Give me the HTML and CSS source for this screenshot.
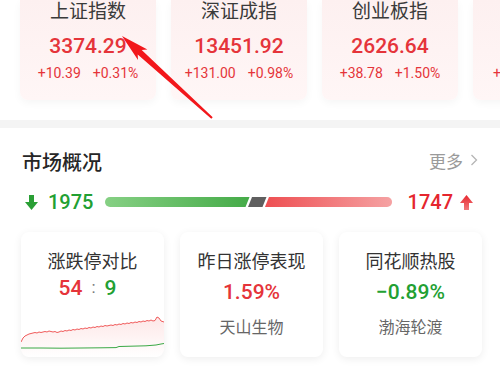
FILE: index.html
```html
<!DOCTYPE html>
<html lang="zh-CN">
<head>
<meta charset="utf-8">
<title>市场概况</title>
<link rel="stylesheet" href="styles.css">
</head>
<body>
<div class="page">
  <div class="indices">
    <div class="idx">
      <div class="idx-name">上证指数</div>
      <div class="idx-val">3374.29</div>
      <div class="idx-chg"><span>+10.39</span><span>+0.31%</span></div>
    </div>
    <div class="idx">
      <div class="idx-name">深证成指</div>
      <div class="idx-val">13451.92</div>
      <div class="idx-chg"><span>+131.00</span><span>+0.98%</span></div>
    </div>
    <div class="idx">
      <div class="idx-name">创业板指</div>
      <div class="idx-val">2626.64</div>
      <div class="idx-chg"><span>+38.78</span><span>+1.50%</span></div>
    </div>
    <div class="idx">
      <div class="idx-name">沪深300</div>
      <div class="idx-val">3912.36</div>
      <div class="idx-chg idx-chg-narrow"><span>+32.04</span><span>+0.83%</span></div>
    </div>
  </div>

  <div class="divider"></div>

  <section class="market">
    <div class="market-head">
      <h2 class="market-title">市场概况</h2>
      <a class="more">更多<svg class="chev" viewBox="0 0 8 12" width="8" height="12"><path d="M1.5 1 L6.5 6 L1.5 11" fill="none" stroke="#b5b5b5" stroke-width="1.3"/></svg></a>
    </div>

    <div class="breadth">
      <svg class="arrow" viewBox="0 0 13 15" width="13" height="15"><path d="M4 0 H9 V7 H13 L6.5 15 L0 7 H4 Z" fill="#2a9f35"/></svg>
      <span class="cnt down">1975</span>
      <svg class="bar" viewBox="0 0 288 10" width="288" height="10" preserveAspectRatio="none">
        <defs>
          <linearGradient id="gg" x1="0" x2="1" y1="0" y2="0">
            <stop offset="0" stop-color="#86d084"/>
            <stop offset="1" stop-color="#45ab48"/>
          </linearGradient>
          <linearGradient id="rg" x1="0" x2="1" y1="0" y2="0">
            <stop offset="0" stop-color="#ee4f52"/>
            <stop offset="1" stop-color="#f5a2a3"/>
          </linearGradient>
        </defs>
        <path d="M5 0 H145 L141 10 H5 A5 5 0 0 1 5 0 Z" fill="url(#gg)"/>
        <path d="M147.5 0 H162 L158 10 H143.5 Z" fill="#5f5f5f"/>
        <path d="M164.5 0 H283 A5 5 0 0 1 283 10 H160.5 Z" fill="url(#rg)"/>
      </svg>
      <span class="cnt up">1747</span>
      <svg class="arrow" viewBox="0 0 13 15" width="13" height="15">
        <defs>
          <linearGradient id="ug" x1="0" x2="0" y1="0" y2="1">
            <stop offset="0" stop-color="#e8262d"/>
            <stop offset="1" stop-color="#f07a7d"/>
          </linearGradient>
        </defs>
        <path d="M4 15 H9 V8 H13 L6.5 0 L0 8 H4 Z" fill="url(#ug)"/>
      </svg>
    </div>

    <div class="tiles">
      <div class="tile">
        <div class="tile-title">涨跌停对比</div>
        <div class="ratio"><span class="r-up">54</span><span class="r-sep">:</span><span class="r-down">9</span></div>
        <svg class="chart" viewBox="0 0 143 45" width="143" height="45" preserveAspectRatio="none">
          <defs>
            <linearGradient id="fg" x1="0" x2="0" y1="0" y2="1">
              <stop offset="0" stop-color="#f36b6b" stop-opacity="0.16"/>
              <stop offset="1" stop-color="#f36b6b" stop-opacity="0"/>
            </linearGradient>
          </defs>
          <path d="M0,30 L2,26 4,24 6,23 8,22 10,21.5 12,21 14,20.5 16,21 18,20 20,20.5 22,20 24,19.5 26,20 28,19 30,19.5 32,20 34,19.5 36,20.5 38,20 40,19 42,19.5 44,18.5 46,19 48,18 50,18.5 52,17.5 54,18 56,17 58,17.5 60,16.5 62,17 64,16 66,16.5 68,15.5 70,16 72,15 74,15.5 76,14.5 78,15 80,14 82,14.5 84,13.5 86,14 88,13.5 90,13 92,13.5 94,12.5 96,13 98,12 100,12.5 102,11.5 104,12 106,11 108,11.5 110,10.5 112,11 114,10 116,10.5 118,9.5 120,10 122,9 124,9.5 126,8.5 128,9 130,8 132,9 134,8.5 136,5 138,6 140,9 143,10 L143,45 L0,45 Z" fill="url(#fg)"/>
          <polyline points="0,30 2,26 4,24 6,23 8,22 10,21.5 12,21 14,20.5 16,21 18,20 20,20.5 22,20 24,19.5 26,20 28,19 30,19.5 32,20 34,19.5 36,20.5 38,20 40,19 42,19.5 44,18.5 46,19 48,18 50,18.5 52,17.5 54,18 56,17 58,17.5 60,16.5 62,17 64,16 66,16.5 68,15.5 70,16 72,15 74,15.5 76,14.5 78,15 80,14 82,14.5 84,13.5 86,14 88,13.5 90,13 92,13.5 94,12.5 96,13 98,12 100,12.5 102,11.5 104,12 106,11 108,11.5 110,10.5 112,11 114,10 116,10.5 118,9.5 120,10 122,9 124,9.5 126,8.5 128,9 130,8 132,9 134,8.5 136,5 138,6 140,9 143,10" fill="none" stroke="#ef5a5a" stroke-width="1"/>
          <polyline points="0,36 20,36 40,36.2 60,36 80,35.8 95,35.6 98,34.5 110,34.2 125,33.8 135,33 140,32 143,31.5" fill="none" stroke="#3aa845" stroke-width="1"/>
        </svg>
      </div>
      <div class="tile">
        <div class="tile-title">昨日涨停表现</div>
        <div class="tile-val up">1.59%</div>
        <div class="tile-sub">天山生物</div>
      </div>
      <div class="tile">
        <div class="tile-title">同花顺热股</div>
        <div class="tile-val down">−0.89%</div>
        <div class="tile-sub">渤海轮渡</div>
      </div>
    </div>
  </section>

  <svg class="annot" viewBox="0 0 500 380" width="500" height="380">
    <polygon points="122,36 147.4,49.6 141.7,50.0 212.7,117.3 211.3,118.7 137.7,54.4 138.0,60.0" fill="#f2171b"/>
  </svg>
</div>
</body>
</html>
```

FILE: styles.css
```css
* { box-sizing: border-box; }

html, body {
  margin: 0;
  padding: 0;
  background: #ffffff;
}

body {
  font-family: Roboto, "Noto Sans CJK SC", sans-serif;
  color: #333333;
  width: 500px;
  height: 380px;
  overflow: hidden;
}

.page {
  position: relative;
  width: 500px;
  height: 380px;
}

/* ---------- index cards ---------- */
.indices {
  display: flex;
  gap: 15px;
  padding-left: 20px;
  height: 120px;
  overflow: hidden;
}

.idx {
  flex: 0 0 136px;
  height: 100px;
  border-radius: 0 0 8px 8px;
  background: linear-gradient(180deg, #fdf0f0 0%, #fff6f6 100%);
  box-shadow: 0 3px 8px rgba(0, 0, 0, 0.04);
  display: flex;
  flex-direction: column;
  align-items: center;
}

.idx-name {
  font-size: 19px;
  line-height: 24px;
  color: #3a3a3a;
}

.idx-val {
  margin-top: 10px;
  font-size: 21px;
  line-height: 24px;
  font-weight: 500;
  color: #e5343a;
}

.idx-chg {
  margin-top: 6px;
  display: flex;
  gap: 12px;
  font-size: 14px;
  line-height: 18px;
  color: #e5343a;
}

.idx-chg-narrow {
  align-self: flex-start;
  margin-left: 20px;
}

.divider {
  height: 8px;
  background: #f4f4f4;
}

/* ---------- market overview ---------- */
.market {
  padding: 21px 22px 0 21px;
}

.market-head {
  display: flex;
  align-items: center;
  justify-content: space-between;
  height: 28px;
}

.market-title {
  margin: 0;
  font-size: 20px;
  line-height: 28px;
  font-weight: 500;
  color: #262626;
  padding-left: 1px;
}

.more {
  display: flex;
  align-items: center;
  gap: 7px;
  font-size: 17px;
  color: #9a9a9a;
  margin-top: -6px;
}

.chev {
  display: block;
}

.breadth {
  display: flex;
  align-items: center;
  height: 28px;
  margin-top: 11px;
  margin-left: 4px;
  padding-right: 5px;
}

.arrow {
  flex: 0 0 13px;
  display: block;
}

.cnt {
  font-size: 20px;
  line-height: 28px;
  font-weight: 500;
}

.cnt.down {
  color: #22a032;
  margin-left: 10px;
  margin-right: 12px;
}

.cnt.up {
  color: #e5262e;
  margin-left: 15px;
  margin-right: 7px;
}

.bar {
  flex: 1;
  display: block;
  height: 10px;
}

/* ---------- tiles ---------- */
.tiles {
  display: grid;
  grid-template-columns: repeat(3, 143px);
  gap: 16px;
  margin-top: 16px;
}

.tile {
  height: 125px;
  border-radius: 8px;
  background: #ffffff;
  box-shadow: 0 2px 9px rgba(0, 0, 0, 0.07);
  display: flex;
  flex-direction: column;
  align-items: center;
  padding-top: 18px;
  overflow: hidden;
}

.tile-title {
  font-size: 18px;
  line-height: 24px;
  color: #333333;
}

.ratio {
  margin-top: 1px;
  display: flex;
  align-items: center;
  gap: 9px;
  font-size: 21px;
  line-height: 26px;
  font-weight: 500;
  margin-left: -10px;
}

.r-up { color: #e5343a; }
.r-down { color: #22a032; }
.r-sep {
  color: #777777;
  font-size: 17px;
  font-weight: 400;
  margin-top: -2px;
}

.chart {
  display: block;
  margin-top: auto;
  width: 143px;
  height: 45px;
}

.tile-val {
  margin-top: 5px;
  font-size: 21px;
  line-height: 26px;
  font-weight: 500;
}

.tile-val.up { color: #e5343a; }
.tile-val.down { color: #22a032; }

.tile-sub {
  margin-top: 12px;
  font-size: 16px;
  line-height: 22px;
  color: #666666;
}

/* ---------- annotation arrow ---------- */
.annot {
  position: absolute;
  top: 0;
  left: 0;
  pointer-events: none;
}
```
